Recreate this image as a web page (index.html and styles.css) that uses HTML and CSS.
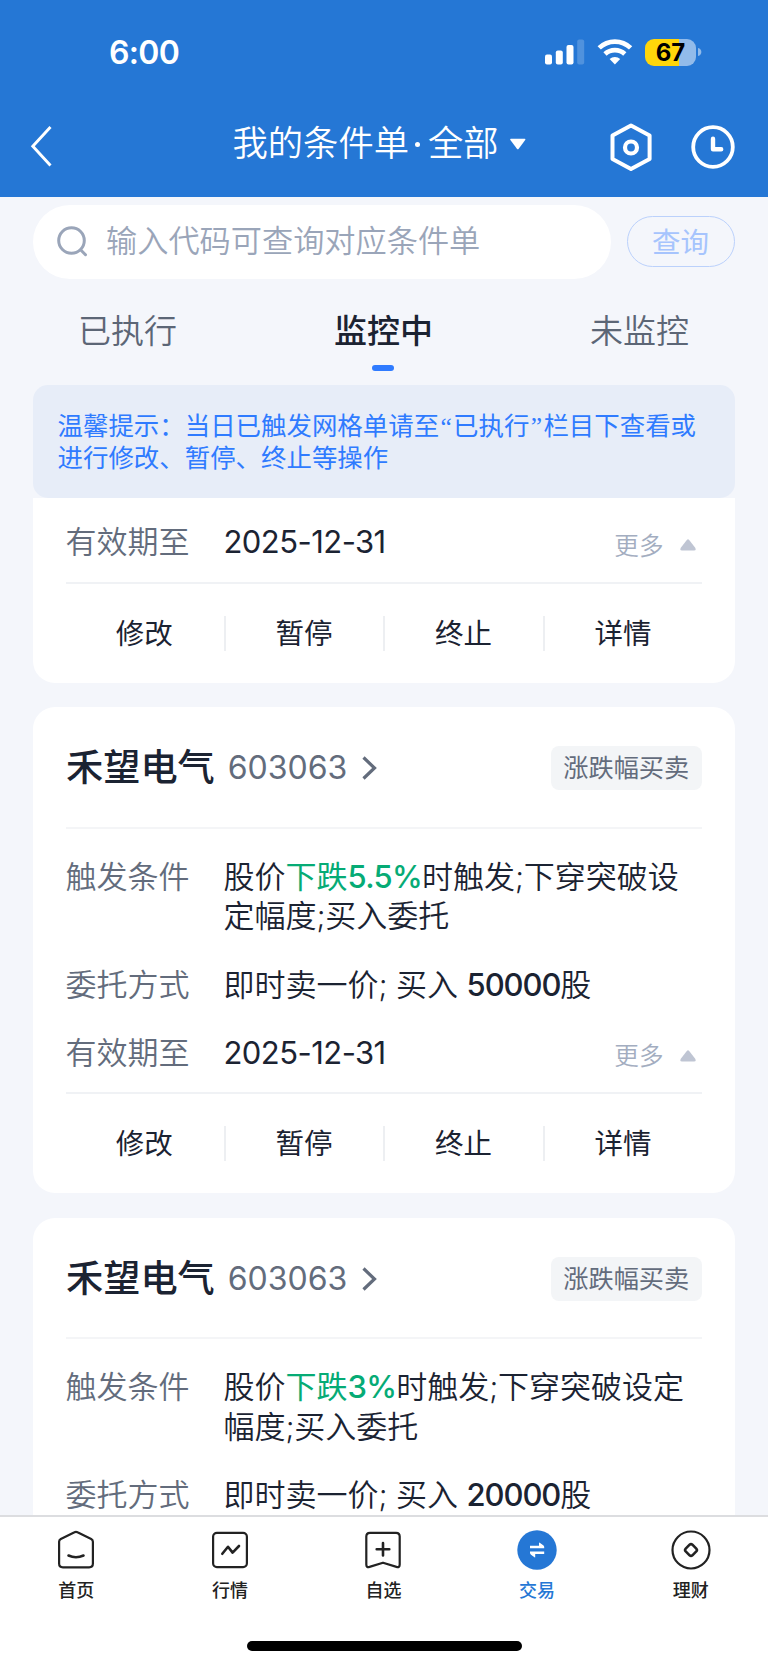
FILE: index.html
```html
<!DOCTYPE html>
<html lang="zh-CN">
<head>
<meta charset="utf-8">
<title>我的条件单</title>
<link rel="stylesheet" href="styles.css">
</head>
<body>
<div class="app">
  <header class="header">
    <div class="status">
      <span class="time">6:00</span>
      <div class="status-icons">
        <svg width="40" height="26" viewBox="0 0 40 26" fill="#fff"><rect x="0" y="15.5" width="7" height="10" rx="2"/><rect x="10.8" y="11.5" width="7" height="14" rx="2"/><rect x="21.5" y="6" width="7" height="19.500" rx="2"/><rect x="32.200" y="0.500" width="7" height="25" rx="2" opacity=".2"/></svg>
        <svg class="wifi" width="36" height="26" viewBox="0 0 36 26" fill="none" stroke="#fff" stroke-width="4.700"><path d="M2.200 8.900a22.600 22.600 0 0 1 31.400 0"/><path d="M8 15a14.400 14.400 0 0 1 19.800 0"/><path d="M17.900 25.400l-5.300-5.300a7.700 7.700 0 0 1 10.600 0z" fill="#fff" stroke="none"/></svg>
        <div class="battery"><span class="battery-body">67</span><svg width="4" height="10" viewBox="0 0 4 10"><path d="M0 1C4.500 2 4.500 8 0 9z" fill="#92bbea"/></svg></div>
      </div>
    </div>
    <nav class="nav">
      <svg class="back" width="24" height="42" viewBox="0 0 24 42" fill="none" stroke="#fff" stroke-width="2.900"><path d="M20.500 2L2.800 21.200 20.500 40.500"/></svg>
      <h1 class="title">我的条件单<span class="dot"></span>全部<svg width="18" height="12" viewBox="0 0 18 12"><path d="M2 .8h13.600q1.400 0 .6 1.200L9.700 10.700q-.9 1-1.800 0L1.400 2Q.6.800 2 .8z" fill="#fff"/></svg></h1>
      <div class="tools">
        <svg width="44" height="48" viewBox="0 0 44 48" fill="none" stroke="#fff" stroke-width="4" stroke-linejoin="round"><path d="M22 2.500L40.600 12.500V36L22 46 3.500 36V12.500z"/><circle cx="22" cy="24.500" r="6" stroke-width="4.200"/></svg>
        <svg width="44" height="44" viewBox="0 0 44 44" fill="none" stroke="#fff" stroke-width="3.800"><circle cx="22" cy="22" r="19.800"/><path d="M22 13.800v10.400h8.200" stroke-width="4.400" stroke-linecap="round" stroke-linejoin="round"/></svg>
      </div>
    </nav>
  </header>

  <main class="content">
    <div class="search-row">
      <div class="search">
        <svg width="32" height="32" viewBox="0 0 32 32" fill="none" stroke="#9aa5b9" stroke-width="3" stroke-linecap="round"><circle cx="14.500" cy="14.500" r="12.800"/><path d="M23.800 24l4.700 4.700"/></svg>
        <span>输入代码可查询对应条件单</span>
      </div>
      <div class="query">查询</div>
    </div>
    <div class="tabs">
      <div class="tab">已执行</div>
      <div class="tab tab-on">监控中</div>
      <div class="tab">未监控</div>
    </div>
    <div class="notice">温馨提示：当日已触发网格单请至<span class="quote">“</span>已执行<span class="quote">”</span>栏目下查看或<br>进行修改、暂停、终止等操作</div>

    <section class="card card-cut">
      <div class="row row-date"><span class="label">有效期至</span><span class="value date">2025-12-31</span><span class="more">更多<svg width="16" height="12" viewBox="0 0 16 12"><path d="M9 .8l6 7.700q1.800 3-1 3H2q-2.800 0-1-3L7 .8q1-1.200 2 0z" fill="#bfc5d3"/></svg></span></div>
      <div class="actions"><span>修改</span><span>暂停</span><span>终止</span><span>详情</span></div>
    </section>

    <section class="card">
      <div class="head"><span class="name">禾望电气</span><span class="code">603063</span><svg class="chev" width="15" height="24" viewBox="0 0 15 24" fill="none" stroke="#636c7c" stroke-width="3.200"><path d="M1.500 1.500L12.500 12 1.500 22.500"/></svg><span class="tag">涨跌幅买卖</span></div>
      <div class="row row-cond"><span class="label">触发条件</span><span class="value">股价<b class="down">下跌<i class="num">5.5%</i></b>时触发<i class="semi">;</i>下穿突破设<br>定幅度<i class="semi">;</i>买入委托</span></div>
      <div class="row row-way"><span class="label">委托方式</span><span class="value">即时卖一价<i class="semi">;</i> 买入 <b class="qty">50000</b>股</span></div>
      <div class="row row-date"><span class="label">有效期至</span><span class="value date">2025-12-31</span><span class="more">更多<svg width="16" height="12" viewBox="0 0 16 12"><path d="M9 .8l6 7.700q1.800 3-1 3H2q-2.800 0-1-3L7 .8q1-1.200 2 0z" fill="#bfc5d3"/></svg></span></div>
      <div class="actions"><span>修改</span><span>暂停</span><span>终止</span><span>详情</span></div>
    </section>

    <section class="card card-last">
      <div class="head"><span class="name">禾望电气</span><span class="code">603063</span><svg class="chev" width="15" height="24" viewBox="0 0 15 24" fill="none" stroke="#636c7c" stroke-width="3.200"><path d="M1.500 1.500L12.500 12 1.500 22.500"/></svg><span class="tag">涨跌幅买卖</span></div>
      <div class="row row-cond"><span class="label">触发条件</span><span class="value">股价<b class="down">下跌<i class="num">3%</i></b>时触发<i class="semi">;</i>下穿突破设定<br>幅度<i class="semi">;</i>买入委托</span></div>
      <div class="row row-way"><span class="label">委托方式</span><span class="value">即时卖一价<i class="semi">;</i> 买入 <b class="qty">20000</b>股</span></div>
    </section>
  </main>

  <footer class="footer">
    <div class="tabbar">
      <div class="item"><svg width="40" height="40" viewBox="0 0 40 40" fill="none" stroke="#222" stroke-width="2.200" stroke-linecap="round" stroke-linejoin="round"><path d="M18.500 2.200q1.500-.8 3 0L35.200 9q1.700.9 1.700 2.800V33.500q0 3.800-3.800 3.800H6.900q-3.800 0-3.800-3.800V11.800Q3.100 9.900 4.800 9z"/><path d="M12.500 25.500q7.500 3.400 15 0" stroke-width="2.600"/></svg><span>首页</span></div>
      <div class="item"><svg width="40" height="40" viewBox="0 0 40 40" fill="none" stroke="#222" stroke-width="2.200" stroke-linecap="round" stroke-linejoin="round"><rect x="3.100" y="2.900" width="33.800" height="34.200" rx="3.800"/><path d="M12.300 23.800l5.700-7 4.600 5.800 6.400-6.600" stroke-width="2.600"/></svg><span>行情</span></div>
      <div class="item"><svg width="40" height="40" viewBox="0 0 40 40" fill="none" stroke="#222" stroke-width="2.200" stroke-linecap="round" stroke-linejoin="round"><path d="M6.900 2.900h26.200q3.600 0 3.600 3.600v28q0 3.300-3.200 2.400L20 32.700 6.500 36.900q-3.200.9-3.200-2.400v-28q0-3.600 3.600-3.600z"/><path d="M20 13v12.500M13.700 19.200h12.600" stroke-width="2.600"/></svg><span>自选</span></div>
      <div class="item item-on"><svg width="40" height="40" viewBox="0 0 40 40"><circle cx="20" cy="20" r="19.700" fill="#2577d5"/><path d="M13 15.800H22V13.100q0-.8.700-.4L26.200 15.300q1 .8 1 1.600v1.300H13zM27.200 24H18.200V26.900q0 .8-.7.400L14 24.700q-1-.8-1-1.600v-1.500H27.200z" fill="#fff"/></svg><span>交易</span></div>
      <div class="item"><svg width="40" height="40" viewBox="0 0 40 40" fill="none" stroke="#222" stroke-width="2.200" stroke-linejoin="round"><circle cx="20" cy="20" r="18.500"/><path d="M18.600 14.700q1.400-1.300 2.800 0l3.900 3.900q1.300 1.400 0 2.800l-3.900 3.900q-1.400 1.300-2.800 0l-3.900-3.900q-1.300-1.400 0-2.800z" stroke-width="2.600"/></svg><span>理财</span></div>
    </div>
    <div class="home-bar"></div>
  </footer>
</div>
</body>
</html>
```
FILE: styles.css
```css
* { box-sizing: border-box; }
body { margin: 0; font-family: Inter, "Noto Sans CJK SC", sans-serif; color: #1b2332; -webkit-font-smoothing: antialiased; }
svg { display: block; flex: none; }
i { font-style: normal; }
b { font-weight: 400; }
.app { width: 768px; height: 1665px; display: flex; flex-direction: column; overflow: hidden; background: #f4f6fb; }

.header { flex: none; height: 196.500px; background: #2577d5; color: #fff; }
.status { height: 104px; display: flex; justify-content: space-between; align-items: center; padding: 0 66px 0 109px; }
.time { font-size: 32px; line-height: 40px; font-weight: 600; letter-spacing: -0.700px; padding-top: 2px; }
.status-icons { display: flex; align-items: center; }
.wifi { margin-left: 12px; }
.battery { display: flex; align-items: center; gap: 2px; margin-left: 12px; }
.battery-body { width: 51px; height: 27px; border-radius: 9px; background: linear-gradient(90deg, #ffd60a 67%, #92bbea 67%); color: #000; font-size: 24px; font-weight: 700; line-height: 27px; text-align: center; }
.nav { height: 86px; display: grid; grid-template-columns: 232.500px 1fr auto; align-items: center; padding-right: 33px; }
.back { margin: -2px 0 0 30px; }
.title { margin: 0; font-size: 35.300px; line-height: 48px; font-weight: 350; display: flex; align-items: center; padding-bottom: 6px; }
.title .dot { width: 5px; height: 5px; margin: 1px 8px 0 6px; border-radius: 50%; background: #fff; }
.title svg { margin: 0 0 0 10px; }
.tools { display: flex; align-items: center; gap: 38px; }

.content { flex: 1; min-height: 0; overflow: hidden; padding: 8.500px 33px 0; }
.search-row { display: flex; align-items: center; justify-content: space-between; }
.search { width: 578px; height: 74px; border-radius: 37px; background: #fff; display: flex; align-items: center; padding-left: 24px; gap: 17px; font-size: 31.200px; line-height: 40px; font-weight: 350; color: #9aa5b9; }
.search span { padding-bottom: 2px; }
.query { width: 108px; height: 51px; margin-bottom: 1px; border: 1px solid #bbd1fb; border-radius: 26px; font-size: 28.500px; line-height: 51px; padding-right: 1px; text-align: center; color: #a6c4fd; }
.tabs { display: flex; justify-content: space-between; height: 105.500px; padding: 29px 46px 0 45px; }
.tab { display: flex; flex-direction: column; align-items: center; font-size: 33px; line-height: 46px; font-weight: 350; color: #5c6676; }
.tab-on { font-weight: 500; color: #1b2332; }
.tab-on::after { content: ""; width: 22px; height: 6px; margin: 10.500px 1px 0 0; border-radius: 3px; background: #2f7bff; }
.notice { height: 113.500px; border-radius: 15px; background: #e7edf8; padding: 25px 25px 0 24.500px; font-size: 25.450px; line-height: 32.500px; color: #2f7bff; white-space: nowrap; }
.quote { display: inline-block; width: 14px; text-align: center; line-height: 1; font-family: "Liberation Serif", serif; }

.card { background: #fff; border-radius: 22px; padding: 0 33px; margin-bottom: 24.500px; overflow: hidden; }
.card-cut { border-radius: 0 0 22px 22px; }
.card-cut .row-date { height: 86px; padding-top: 24px; }
.card-last { height: 486px; }
.head { height: 121.500px; display: flex; align-items: center; border-bottom: 2px solid #f4f5f7; }
.name { font-size: 37.200px; line-height: 48px; font-weight: 500; }
.head > * { margin-top: 2.500px; }
.code { margin-left: 13px; font-size: 32px; line-height: 40px; color: #636c7c; }
.chev { margin-left: 15px; }
.tag { margin-left: auto; width: 151.500px; height: 44px; text-align: center; border-radius: 8px; background: #f3f5f7; color: #636c7c; font-size: 25.200px; line-height: 44px; }
.row { display: flex; font-size: 31px; line-height: 39.500px; font-weight: 350; }
.label { flex: none; width: 158px; margin-left: -0.500px; color: #636c7c; }
.value { white-space: nowrap; }
.date { letter-spacing: -0.550px; font-weight: 400; }
.down { color: #06ab75; }
.num { font-weight: 500; letter-spacing: -0.700px; }
.semi { letter-spacing: -0.400px; }
.qty { font-weight: 500; letter-spacing: -1.100px; }
.row-cond { padding-top: 28px; }
.row-way { padding-top: 29px; }
.row-date { height: 89.500px; padding-top: 28.500px; border-bottom: 2px solid #f0f2f5; }
.more { margin-left: auto; display: flex; align-items: center; gap: 16.500px; height: 49px; padding-right: 6px; font-size: 24.600px; color: #a3adc0; }
.more svg { margin-top: -3px; }
.actions { height: 99.500px; display: grid; grid-template-columns: repeat(4, 159.600px); align-items: center; text-align: center; }
.card-cut .actions { height: 98.500px; }
.actions span { height: 35px; line-height: 35px; font-size: 28.500px; padding-right: 1px; border-right: 2px solid #edeff2; }
.actions span:last-child { border-right: 0; padding-right: 3px; }

.footer { flex: none; height: 150px; border-top: 2px solid #dcdde0; background: #fff; }
.tabbar { height: 124px; display: grid; grid-template-columns: repeat(5, 1fr); padding-top: 12.500px; }
.item { display: flex; flex-direction: column; align-items: center; gap: 8px; font-size: 18px; line-height: 26px; font-weight: 500; color: #222; padding-right: 1px; }
.item-on { color: #2577d5; }
.home-bar { width: 275px; height: 10px; margin: 0 auto; border-radius: 5px; background: #000; }
```
